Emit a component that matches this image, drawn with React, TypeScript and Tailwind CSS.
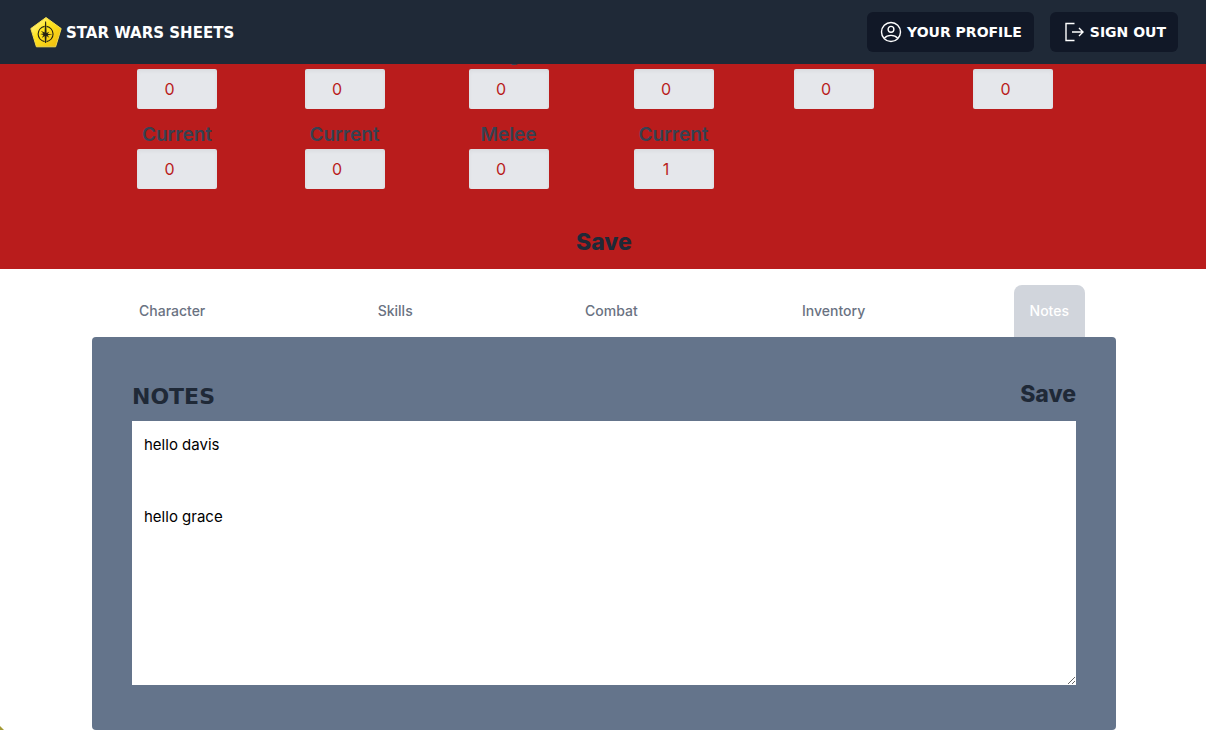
const stats = [
  { top: "", topName: "Threshold one", topValue: 0, bottom: "Current", bottomValue: 0 },
  { top: "", topName: "Threshold two", topValue: 0, bottom: "Current", bottomValue: 0 },
  { top: "Ranged", topName: "Ranged", topValue: 0, bottom: "Melee", bottomValue: 0 },
  { top: "", topName: "Threshold three", topValue: 0, bottom: "Current", bottomValue: 1 },
  { top: "", topName: "Soak", topValue: 0 },
  { top: "", topName: "Credits", topValue: 0 },
];

const tabs = ["Character", "Skills", "Combat", "Inventory", "Notes"];

function Logo() {
  return (
    <svg viewBox="0 0 32 32" className="size-8" aria-hidden="true">
      <defs>
        <linearGradient id="gold" x1="0" y1="0" x2="1" y2="1">
          <stop offset="0" stopColor="#fff9b8" />
          <stop offset="0.4" stopColor="#ffe51f" />
          <stop offset="1" stopColor="#eeb80c" />
        </linearGradient>
      </defs>
      <path d="M16 1.5 31.2 12.6 25.6 30.8H6.4L.8 12.6Z" fill="url(#gold)" stroke="#f5dc4c" strokeWidth="1" strokeLinejoin="round" />
      <path d="M14.6 10.4a7.7 7.7 0 0 0 0 15.2M16.6 10.4a7.7 7.7 0 0 1 0 15.2" fill="none" stroke="#262313" strokeWidth="1.1" />
      <path d="M15.1 5.5h1l.5 11.5 2.6-1.2-1.5 2.2 4.8.3-4.8.9 1.6 2.6-2.7-1.8-.5 7h-1l-.5-7-2.8 1.9 1.6-2.8-3.2-1 3.2-.5-2.6-2.8 3.8 1.7Z" fill="#262313" />
    </svg>
  );
}

function ProfileIcon() {
  return (
    <svg viewBox="0 0 24 24" className="size-6" fill="none" stroke="currentColor" strokeWidth="1.4" aria-hidden="true">
      <circle cx="12" cy="12" r="9.5" />
      <circle cx="12" cy="9.3" r="2.9" />
      <path d="M5.2 18.4c1.5-1.9 4-3 6.800-3s5.300 1.100 6.800 3" />
    </svg>
  );
}

function SignOutIcon() {
  return (
    <svg viewBox="0 0 24 24" className="size-6" fill="none" stroke="currentColor" strokeWidth="1.4" aria-hidden="true">
      <path d="M12.500 3.500H4v17h8.500M10 12h10.500M17 8l4 4-4 4" />
    </svg>
  );
}

function Stat({ name, label, value }: { name: string; label: string; value: number }) {
  return (
    <label className="flex flex-col items-center text-[19px] leading-7 font-semibold text-[#374151]">
      <span className="h-7">{label}</span>
      <input
        type="number"
        aria-label={name}
        defaultValue={value}
        className="h-10 w-20 rounded-xs bg-gray-200 px-3 text-center text-base font-normal text-[#b91c1c] inset-shadow-sm"
      />
    </label>
  );
}

export default function App() {
  return (
    <div className="relative bg-white font-['Inter',sans-serif]">
      <header className="sticky top-0 z-10 flex h-16 items-center justify-between bg-[#1f2937] pr-7 pl-[30px] font-['DejaVu_Sans',sans-serif] font-bold text-white">
        <a href="#" className="flex items-center gap-1 text-[15px] uppercase">
          <Logo />
          <span className="pt-0.5">Star Wars Sheets</span>
        </a>
        <nav className="flex gap-4 text-sm">
          <button className="flex h-10 items-center gap-1 rounded-md bg-[#111827] px-3 uppercase">
            <ProfileIcon />
            Your Profile
          </button>
          <button className="flex h-10 items-center gap-1 rounded-md bg-[#111827] px-3 uppercase">
            <SignOutIcon />
            Sign Out
          </button>
        </nav>
      </header>

      <section className="-mt-6 bg-[#b91c1c] pt-px pb-[11px] pl-0.5">
        <div className="mx-auto grid max-w-5xl grid-cols-[170fr_165fr_163fr_167fr_153fr_206fr]">
          {stats.map((s) => (
            <div key={s.topName} className="flex flex-col gap-3">
              <Stat name={s.topName} label={s.top} value={s.topValue} />
              {s.bottom && <Stat name={s.bottom} label={s.bottom} value={s.bottomValue} />}
            </div>
          ))}
        </div>
        <div className="mt-[37px] flex justify-center">
          <button className="text-[23px] leading-8 font-extrabold text-[#1f2937]">Save</button>
        </div>
      </section>

      <main className="pt-4 pl-0.5">
        <div className="mx-auto max-w-5xl">
          <nav className="grid grid-cols-[auto_29fr_auto_30fr_auto] justify-items-center px-[31px]">
            {tabs.map((tab) => (
              <a
                key={tab}
                href="#"
                className={
                  tab === "Notes"
                    ? "rounded-t-lg bg-gray-300 p-4 text-sm font-medium text-white"
                    : "p-4 text-sm font-medium text-gray-500"
                }
              >
                {tab}
              </a>
            ))}
          </nav>
          <div className="rounded bg-[#64748b] px-10 pt-10 pb-[45px]">
            <div className="flex h-11 items-start justify-between font-bold text-[#1f2937]">
              <h2 className="pt-1 font-['DejaVu_Sans',sans-serif] text-[22px] leading-8 uppercase">Notes</h2>
              <button className="pt-px text-[23px] leading-8 font-extrabold">Save</button>
            </div>
            <textarea
              aria-label="Notes"
              rows={10}
              defaultValue={"hello davis\n\n\nhello grace"}
              className="block w-full bg-white p-3 text-[15px] leading-6 text-black"
            />
          </div>
        </div>
      </main>
      <svg viewBox="0 0 4 4" className="absolute bottom-0 left-0 size-1" aria-hidden="true">
        <path d="M0 0 4 4H0Z" fill="#a39a35" />
      </svg>
    </div>
  );
}
